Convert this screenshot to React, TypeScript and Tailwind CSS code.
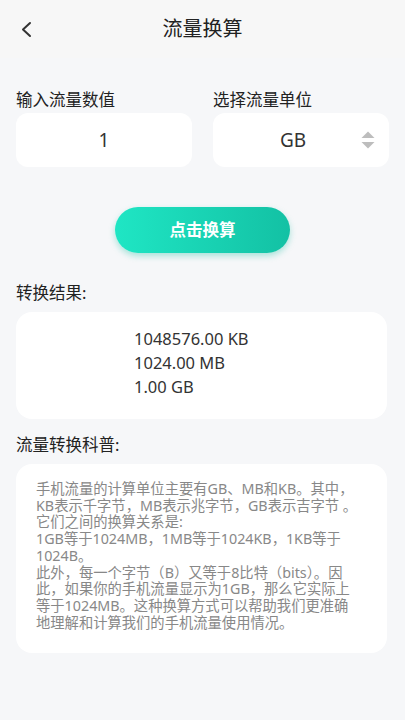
import React from "react";

export default function App() {
  const font = { fontFamily: '"Noto Sans", "Noto Sans CJK SC", sans-serif' };
  const lines = [
    "手机流量的计算单位主要有GB、MB和KB。其中，",
    "KB表示千字节，MB表示兆字节，GB表示吉字节 。",
    "它们之间的换算关系是:",
    "1GB等于1024MB，1MB等于1024KB，1KB等于",
    "1024B。",
    "此外，每一个字节（B）又等于8比特（bits）。因",
    "此，如果你的手机流量显示为1GB，那么它实际上",
    "等于1024MB。这种换算方式可以帮助我们更准确",
    "地理解和计算我们的手机流量使用情况。",
  ];
  return (
    <div className="w-[405px] min-h-[720px] bg-[#f6f7f9] text-[#333]" style={font}>
      <div className="h-[58px] bg-[#f7f7f7] relative flex items-center justify-center">
        <svg className="absolute left-[20px] top-[21px]" width="14" height="17" viewBox="0 0 14 17">
          <path d="M10 2 L3 8.5 L10 15" fill="none" stroke="#333" strokeWidth="2" strokeLinecap="round" strokeLinejoin="round" />
        </svg>
        <div className="text-[20px] text-[#222] leading-none">流量换算</div>
      </div>

      <div className="px-4">
        <div className="mt-[31px] grid grid-cols-2 gap-[21px]">
          <div>
            <div className="text-[16.5px] leading-[22px] text-[#222]">输入流量数值</div>
            <div className="mt-[2px] h-[54px] bg-white rounded-[12px] flex items-center justify-center text-[19px] text-[#333]">1</div>
          </div>
          <div>
            <div className="text-[16.5px] leading-[22px] text-[#222]">选择流量单位</div>
            <div className="mt-[2px] h-[54px] bg-white rounded-[12px] relative flex items-center justify-center pr-[16px] text-[19px] text-[#333]">
              GB
              <svg className="absolute right-[14px] top-[18px]" width="14" height="18" viewBox="0 0 14 18">
                <path d="M7 0.5 L13.5 7 L0.5 7 Z" fill="#bdbdbd" />
                <path d="M7 17.5 L13.5 11 L0.5 11 Z" fill="#bdbdbd" />
              </svg>
            </div>
          </div>
        </div>

        <div className="mt-[40px] flex justify-center">
          <button className="w-[175px] h-[46px] rounded-full bg-gradient-to-r from-[#1fe6c4] to-[#13c1a4] text-white text-[16.5px] font-bold shadow-[0_3px_6px_rgba(20,190,160,0.35)]">
            点击换算
          </button>
        </div>

        <div className="mt-[29px] text-[16.5px] leading-[22px] text-[#222]">转换结果:</div>
        <div className="mt-[8px] w-[371px] bg-white rounded-[16px] pt-[15px] pb-[20px] pl-[118px] text-[16.5px] leading-[24px] text-[#333]">
          <div>1048576.00 KB</div>
          <div>1024.00 MB</div>
          <div>1.00 GB</div>
        </div>

        <div className="mt-[15px] text-[16.5px] leading-[22px] text-[#222]">流量转换科普:</div>
        <div className="mt-[8px] w-[371px] bg-white rounded-[16px] pt-[17px] pb-[22px] pl-[20px] pr-[10px] text-[14.3px] leading-[16.7px] text-[#888]">
          {lines.map((l, i) => (
            <div key={i} className="whitespace-nowrap">{l}</div>
          ))}
        </div>
      </div>
    </div>
  );
}
